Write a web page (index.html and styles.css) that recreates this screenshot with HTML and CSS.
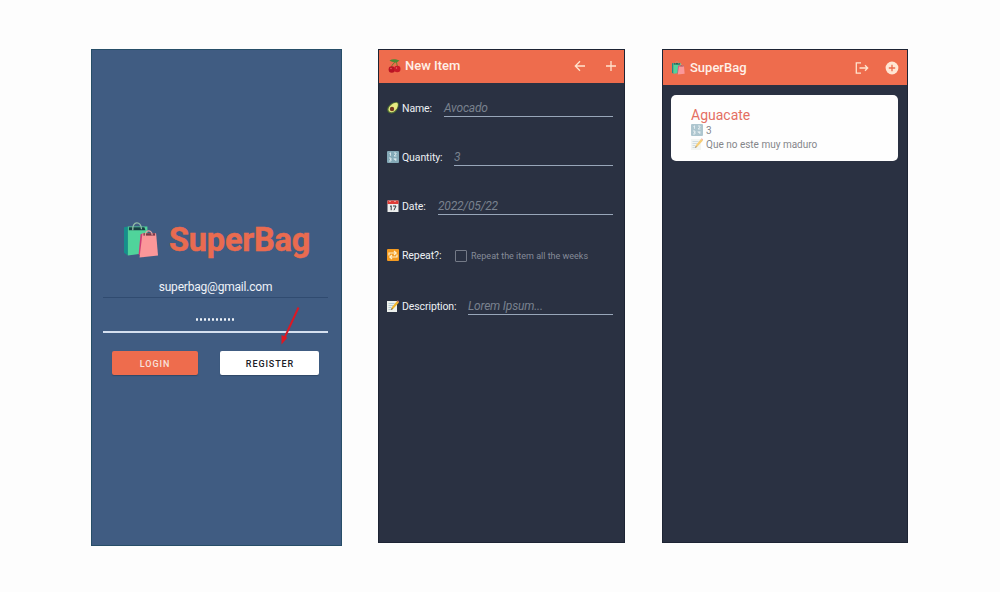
FILE: index.html
```
<!DOCTYPE html>
<html lang="en">
<head>
<meta charset="utf-8">
<title>SuperBag</title>
<link rel="stylesheet" href="styles.css">
</head>
<body>
<svg class="defs" width="0" height="0">
  <symbol id="bags" viewBox="0 0 36 36">
    <path d="M0 5l4-1v30l-4-3z" fill="#168f8b"/>
    <path d="M4 4h20l1 27-21 3z" fill="#50d49b"/>
    <path d="M5 5h16l1 3H5z" fill="#183f43"/>
    <path d="M9 8C8-2 18-2 18 7" fill="none" stroke="#91bda7" stroke-width="1.3"/>
    <path d="M17 12l3-1v25l-5-3z" fill="#cc3c77"/>
    <path d="M19 11h14l2 23-19 2z" fill="#fb9799"/>
    <path d="M20 11h12v2.500H20z" fill="#793849"/>
    <path d="M22 14c-1-7 7-7 7-1" fill="none" stroke="#e5a5a2" stroke-width="1.2"/>
  </symbol>
  <symbol id="numbers" viewBox="0 0 12 12">
    <rect width="12" height="12" rx="1" fill="#84a9b7"/>
    <path d="M2.5 2.5l1-.7v3M7 2h2v1.2L7 5h2.5M2 7h2v1.3H3h1V10H2M7.2 7v1.5h2M8.8 7v3" fill="none" stroke="#dceaed" stroke-width=".9"/>
  </symbol>
  <symbol id="memo" viewBox="0 0 12 12">
    <path d="M0 1h10v11H0z" fill="#edf1ed"/>
    <path d="M1.5 3.5h6M1.5 5.5h5M1.5 7.5h3M1.5 9.5h3" stroke="#9eb9c5" stroke-width=".7"/>
    <path d="M4 10l1-3 5-6 2 1.5-5.5 6z" fill="#f2b52e"/>
    <path d="M10 1l.8-.8L12 1.400v1z" fill="#e77874"/>
    <path d="M4 10l.8-2 1.200 1z" fill="#5b5140"/>
  </symbol>
</svg>
<main class="board">
  <section class="phone login">
    <div class="brand">
      <svg class="brand-icon"><use href="#bags"/></svg>
      <h1>SuperBag</h1>
    </div>
    <div class="email">superbag@gmail.com</div>
    <div class="password"><i></i><i></i><i></i><i></i><i></i><i></i><i></i><i></i><i></i><i></i></div>
    <div class="actions">
      <button class="btn btn-login">LOGIN</button>
      <button class="btn btn-register">REGISTER</button>
    </div>
    <svg class="arrow" viewBox="0 0 20 40"><path d="M18.500.5L3.500 33" stroke="#df1722" stroke-width="1.900"/><path d="M1.500 37.500L1.500 28l5.800 2.700z" fill="#df1722"/></svg>
  </section>

  <section class="phone editor">
    <header class="bar">
      <svg class="bar-icon" viewBox="0 0 12 14">
        <path d="M3 9C3 5 6 4 8 2c0 3 1 5 1 7" fill="none" stroke="#6d7b2a"/>
        <path d="M1 1.500C4-.5 7 0 11 1.500 8 4.500 4 3.500 1 1.500z" fill="#4c8b35"/>
        <circle cx="3.300" cy="10.500" r="3.200" fill="#b91424"/><circle cx="8.800" cy="10" r="3.200" fill="#c81b29"/>
        <circle cx="2.500" cy="9.500" r=".7" fill="#ed6971"/><circle cx="8" cy="9" r=".7" fill="#ed6971"/>
      </svg>
      <h2>New Item</h2>
      <svg class="bar-action" viewBox="0 0 12 12"><path d="M11 6H1.500M6 1.200L1.300 6 6 10.800"/></svg>
      <svg class="bar-action" viewBox="0 0 12 12"><path d="M6 1v10M1 6h10"/></svg>
    </header>
    <form class="form">
      <div class="row">
        <svg class="emoji" viewBox="0 0 12 12"><path d="M11 .6c2 2-.2 8-3.500 10-3 2-7.500.5-7.300-3C.5 3 8-2 11 .6z" fill="#537333"/><path d="M10.500 1.200c1.200 2-.5 6.500-3.500 8.300-2.500 1.500-5.500.5-5.500-2C1.500 4 8-.5 10.500 1.200z" fill="#e8eb83"/><circle cx="5" cy="7" r="2.200" fill="#743820"/></svg>
        <span class="label name">Name:</span><span class="field">Avocado</span>
      </div>
      <div class="row">
        <svg class="emoji"><use href="#numbers"/></svg>
        <span class="label quantity">Quantity:</span><span class="field">3</span>
      </div>
      <div class="row">
        <svg class="emoji" viewBox="0 0 12 12"><path d="M.5.500h11V12H.5z" fill="#eceeed"/><path d="M.5.500h11V4H.5z" fill="#df3c37"/><path d="M2 1.500h2M7 1.500h2" stroke="#f2b4ab" stroke-width=".7"/><path d="M3 6.500l1.200-.8v4.500M6 6h3L7 10.200" stroke="#353a40" fill="none"/></svg>
        <span class="label date">Date:</span><span class="field">2022/05/22</span>
      </div>
      <div class="row">
        <svg class="emoji" viewBox="0 0 12 12"><rect width="12" height="12" rx="1" fill="#f39a21"/><path d="M2 6.500V4h6.500M7 2l2.200 2L7 6M10 5.500V8H3.500M5 6L2.800 8 5 10" fill="none" stroke="#fff0cc" stroke-width="1.200"/></svg>
        <span class="label repeat">Repeat?:</span><span class="checkbox"></span><span class="hint">Repeat the item all the weeks</span>
      </div>
      <div class="row last">
        <svg class="emoji"><use href="#memo"/></svg>
        <span class="label description">Description:</span><span class="field">Lorem Ipsum...</span>
      </div>
    </form>
  </section>

  <section class="phone list">
    <header class="bar">
      <svg class="bar-icon"><use href="#bags"/></svg>
      <h2>SuperBag</h2>
      <svg class="bar-action logout" viewBox="0 0 14 12"><path d="M6 .8H1.300v10.400H6M4.500 6h8M10 3.300L12.700 6 10 8.700"/></svg>
      <svg class="bar-action add" viewBox="0 0 14 14"><circle cx="7" cy="7" r="6.400"/><path d="M7 3.800v6.400M3.800 7h6.400"/></svg>
    </header>
    <article class="card">
      <h3>Aguacate</h3>
      <p><svg class="emoji"><use href="#numbers"/></svg><span>3</span></p>
      <p><svg class="emoji"><use href="#memo"/></svg><span class="note">Que no este muy maduro</span></p>
    </article>
  </section>
</main>
</body>
</html>
```
FILE: styles.css
```
* { box-sizing: border-box; }
body { margin: 0; background: #fdfdfd; font-family: Roboto, sans-serif; }
h1, h2, h3, p { margin: 0; }
.defs { position: absolute; }
svg { display: block; flex: none; }
.board { display: flex; align-items: flex-start; width: 1000px; height: 592px; padding: 49px 0 0 91px; }
.phone { position: relative; flex: none; height: 494px; background: #2a3142; border: 1px solid #1d2434; }
.login { width: 251px; height: 497px; margin-right: 36px; padding-top: 172px; background: #405c82; border-color: #274e68; }
.editor { width: 247px; margin-right: 37px; }
.list { width: 246px; }

.brand { display: flex; height: 38px; padding-left: 32px; }
.brand-icon { width: 35px; height: 36px; margin-right: 10px; }
.brand h1 { font-size: 32.5px; line-height: 37px; font-weight: 700; letter-spacing: -.2px; -webkit-text-stroke: .5px #e96b50; color: #e96b50; }
.email { display: flex; justify-content: center; height: 21px; margin: 17px 13px 0 11px; border-bottom: 1px solid #304b70; color: #eef2f8; font-size: 12px; letter-spacing: -.2px; line-height: 20px; }
.password { display: flex; justify-content: center; align-items: center; gap: 2px; height: 35px; margin: 0 13px 0 11px; padding: 9px 1px 0 0; border-bottom: 2px solid #d5e0f0; }
.password i { width: 2px; height: 3px; border-radius: 1px; background: #eef3f9; }
.actions { display: flex; gap: 22px; margin: 18px 0 0 20px; }
.btn { height: 24px; padding: 1px 0 0; border: 0; border-radius: 2px; font: 500 9px Roboto, sans-serif; letter-spacing: .9px; box-shadow: 0 1px 1px #304867; }
.btn-login { width: 86px; background: #ee6c4d; color: #f8e2dc; }
.btn-register { width: 99px; padding-left: 1px; background: #fff; color: #202027; }
.arrow { position: absolute; left: 188px; top: 257px; width: 20px; height: 40px; }

.bar { display: flex; align-items: center; height: 33px; padding: 0 7px 2px 9px; background: #ee6c4d; }
.list .bar { height: 35px; padding: 1px 8px 0 9px; }
.bar-icon { width: 13px; height: 14px; margin-right: 4px; }
.list .bar-icon { margin-right: 5px; }
.bar h2 { flex: 1; font-size: 13px; line-height: 18px; font-weight: 500; color: #fff0e8; }
.bar-action { width: 12px; height: 12px; margin-left: 19px; fill: none; stroke: #ffe4ce; stroke-width: 1.3; }
.bar .logout { width: 14px; height: 12px; margin: 0; }
.bar .add { width: 14px; height: 14px; margin-left: 16px; stroke: #ee6c4d; }
.add circle { fill: #ffe6d4; stroke: none; }

.form { padding: 0 11px 0 8px; }
.row { display: flex; align-items: center; height: 49px; padding-top: 1px; }
.row.last { margin-top: 2px; }
.emoji { width: 12px; height: 12px; }
.label { margin-left: 3px; padding-top: 2px; font-size: 10.5px; letter-spacing: -.1px; line-height: 16px; color: #edf0f4; white-space: nowrap; }
.name { width: 42px; }
.quantity { width: 52px; }
.date { width: 36px; }
.repeat { width: 53px; }
.description { width: 66px; }
.field { flex: 1; height: 18px; border-bottom: 1px solid #98a6b9; font-size: 12px; letter-spacing: -.2px; line-height: 18px; font-style: italic; color: #79818e; }
.checkbox { width: 12px; height: 12px; margin-top: 1px; border: 1px solid #747a87; border-radius: 1px; }
.hint { margin-left: 4px; padding-top: 2px; font-size: 9px; color: #858b98; white-space: nowrap; }

.card { width: 227px; height: 66px; margin: 10px 0 0 8px; padding: 12px 0 0 20px; background: #fefefe; border-radius: 5px; }
.card h3 { font-size: 14px; line-height: 16px; font-weight: 400; color: #e46f63; }
.card p { display: flex; align-items: center; gap: 3px; height: 14px; font-size: 10px; color: #85868a; }
.card .emoji { opacity: .65; }
```
